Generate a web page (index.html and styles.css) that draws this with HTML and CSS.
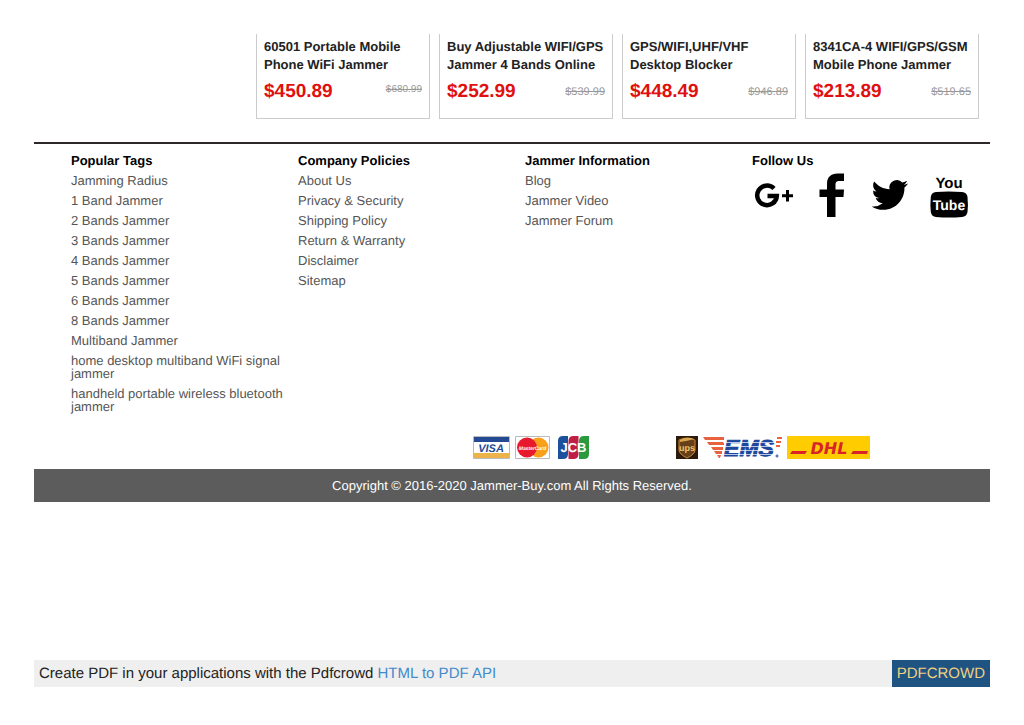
FILE: index.html
```html
<!DOCTYPE html>
<html lang="en">
  <head>
  <meta charset="UTF-8">
  <title>Jammer-Buy.com</title>
  <link rel="stylesheet" href="styles.css">
  </head>
  <body>
    <main class="products">
      <div class="product">
        <h3>60501 Portable Mobile Phone WiFi Jammer</h3>
        <div class="prices">
          <span class="price">$450.89</span>
          <del class="small">$680.99</del>
        </div>
      </div>
      <div class="product">
        <h3>Buy Adjustable WIFI/GPS Jammer 4 Bands Online</h3>
        <div class="prices">
          <span class="price">$252.99</span>
          <del>$539.99</del>
        </div>
      </div>
      <div class="product">
        <h3>GPS/WIFI,UHF/VHF Desktop Blocker</h3>
        <div class="prices">
          <span class="price">$448.49</span>
          <del>$946.89</del>
        </div>
      </div>
      <div class="product">
        <h3>8341CA-4 WIFI/GPS/GSM Mobile Phone Jammer</h3>
        <div class="prices">
          <span class="price">$213.89</span>
          <del>$519.65</del>
        </div>
      </div>
    </main>

    <footer>
      <div class="columns">
        <div>
          <h4>Popular Tags</h4>
          <ul>
            <li><a href="#">Jamming Radius</a></li>
            <li><a href="#">1 Band Jammer</a></li>
            <li><a href="#">2 Bands Jammer</a></li>
            <li><a href="#">3 Bands Jammer</a></li>
            <li><a href="#">4 Bands Jammer</a></li>
            <li><a href="#">5 Bands Jammer</a></li>
            <li><a href="#">6 Bands Jammer</a></li>
            <li><a href="#">8 Bands Jammer</a></li>
            <li><a href="#">Multiband Jammer</a></li>
            <li><a href="#">home desktop multiband WiFi signal jammer</a></li>
            <li><a href="#">handheld portable wireless bluetooth jammer</a></li>
          </ul>
        </div>
        <div>
          <h4>Company Policies</h4>
          <ul>
            <li><a href="#">About Us</a></li>
            <li><a href="#">Privacy &amp; Security</a></li>
            <li><a href="#">Shipping Policy</a></li>
            <li><a href="#">Return &amp; Warranty</a></li>
            <li><a href="#">Disclaimer</a></li>
            <li><a href="#">Sitemap</a></li>
          </ul>
        </div>
        <div>
          <h4>Jammer Information</h4>
          <ul>
            <li><a href="#">Blog</a></li>
            <li><a href="#">Jammer Video</a></li>
            <li><a href="#">Jammer Forum</a></li>
          </ul>
        </div>
        <div>
          <h4 class="follow">Follow Us</h4>
          <div class="social">
            <a href="#" aria-label="Google Plus">
              <svg width="44" height="46" viewBox="0 0 44 46">
                <path d="M22 16.500A9.800 9.800 0 1 0 24.800 24H15.500" fill="none" stroke="#000" stroke-width="4.500"/>
                <path d="M35.500 18v11.500M30 23.800h11" stroke="#000" stroke-width="3"/>
              </svg>
            </a>
            <a href="#" aria-label="Facebook">
              <svg width="44" height="46" viewBox="0 0 44 46">
                <path d="M17 45V25H9.500v-7.500H17V12c0-7 4-10.500 10.500-10.500h6.500V9h-4.500c-3 0-4 1-4 4v4.500H34L33.500 25h-8v20z"/>
              </svg>
            </a>
            <a href="#" aria-label="Twitter">
              <svg width="44" height="46" viewBox="0 0 24 24">
                <path transform="translate(2 2) scale(.83)" d="M23.950 4.570a10 10 0 0 1-2.820.770 4.960 4.960 0 0 0 2.160-2.720c-.950.550-2 .950-3.130 1.180a4.920 4.920 0 0 0-8.380 4.480C7.690 8.090 4.070 6.130 1.640 3.160a4.820 4.820 0 0 0-.670 2.480c0 1.710.870 3.210 2.190 4.100a4.900 4.900 0 0 1-2.230-.620v.060a4.920 4.920 0 0 0 3.950 4.830 5 5 0 0 1-2.210.080 4.940 4.940 0 0 0 4.600 3.420A9.870 9.870 0 0 1 0 19.540a13.990 13.990 0 0 0 7.550 2.210c9.050 0 14-7.500 14-13.980 0-.210 0-.420-.020-.630a9.940 9.940 0 0 0 2.420-2.570z"/>
              </svg>
            </a>
            <a href="#" aria-label="YouTube">
              <svg width="44" height="46" viewBox="0 0 44 46">
                <path d="M10 20q12-1 26 0 5 .5 5.500 5 .8 8 0 15-.7 4.500-5.500 5-13 1-26 0-4.500-.5-5.200-5-.8-7.500 0-15 .5-4.500 5.200-5z"/>
                <text x="23" y="16" font-size="15">You</text>
                <text x="23" y="38" font-size="14" fill="#fff">Tube</text>
              </svg>
            </a>
          </div>
        </div>
      </div>

      <div class="payments">
        <svg class="visa" width="37" height="24" viewBox="0 0 37 24">
          <path d="M.500.500h36v22H.500z" fill="#fff" stroke="#bbb"/>
          <path d="M1 1h35v5H1z" fill="#234a93"/>
          <path d="M1 17h35v5H1z" fill="#edb34b"/>
          <text x="18" y="16" font-size="11" font-style="italic" fill="#234a93">VISA</text>
        </svg>
        <svg class="mastercard" width="35" height="24" viewBox="0 0 35 24">
          <path d="M.500.500h34v22H.500z" fill="#fff" stroke="#bbb"/>
          <circle cx="23.500" cy="11.500" r="10" fill="#f9a01b"/>
          <circle cx="12" cy="11.500" r="10" fill="#e8192c"/>
          <text x="17.500" y="14" font-size="5" font-style="italic" fill="#fff">MasterCard</text>
        </svg>
        <svg class="jcb" width="31" height="24" viewBox="0 0 31 24">
          <path d="M5 0h5v18q0 5-5 5H0V5q0-5 5-5z" fill="#1c4f9c"/>
          <path d="M15.500 0h5v18q0 5-5 5h-5V5q0-5 5-5z" fill="#c01f45"/>
          <path d="M26 0h5v18q0 5-5 5h-5V5q0-5 5-5z" fill="#2b9a3e"/>
          <text x="15.500" y="16" font-size="13" fill="#fff">JCB</text>
        </svg>
        <svg class="ups" width="22" height="24" viewBox="0 0 22 24">
          <path d="M0 0h22v23H0z" fill="#2d1a0b"/>
          <path d="M3 4q8-4 16 0v10q0 4-8 8-8-4-8-8z" fill="#67401a" stroke="#c08a3a"/>
          <path d="M4 6q8-1 14-3-7-3-14 1z" fill="#d9a54e"/>
          <text x="11" y="15" font-size="9" fill="#efc36b">ups</text>
        </svg>
        <svg class="ems" width="79" height="24" viewBox="0 0 79 24">
          <path d="M0 1h21v3H2zM4 6h17v3H6zM8 11h12v3H10zM11 15h8v3h-6zM14 19h4l-1 3h-1z" fill="#e9623f"/>
          <path d="M74 1h5v2h-5zM73 5h5v2h-5zM73 9h4v2h-4z" fill="#e9623f"/>
          <text x="46" y="20" font-size="23" font-style="italic" fill="#1c479c" stroke="#1c479c">EMS</text>
          <path d="M20 6.500h52M20 10.500h52M20 14.500h52M20 18.500h52" stroke="#fff" stroke-width=".7"/>
          <circle cx="74" cy="20" r="1" fill="none" stroke="#1c479c"/>
        </svg>
        <svg class="dhl" width="83" height="24" viewBox="0 0 83 24">
          <path d="M0 0h83v23H0z" fill="#fc0"/>
          <path d="M5 15h15l-2 3H3zM66 15h15l-1 3H64z" fill="#d8232a"/>
          <text class="wide" x="42" y="18" font-size="16" font-style="italic" fill="#d8232a">DHL</text>
        </svg>
      </div>

      <p class="copyright">Copyright © 2016-2020 Jammer-Buy.com All Rights Reserved.</p>
    </footer>

    <div class="pdfcrowd">
      <p>Create PDF in your applications with the Pdfcrowd <a href="#">HTML to PDF API</a></p>
      <a class="brand" href="#">PDFCROWD</a>
    </div>
  </body>
</html>
```
FILE: styles.css
```css
* {
    box-sizing: border-box;
}

body {
    display: flex;
    flex-direction: column;
    min-height: 100vh;
    margin: 0;
    padding: 34px 34px 38px;
    background: #fff;
    font: 13px/13px "Liberation Sans", Arial, sans-serif;
    text-rendering: geometricPrecision;
}

h3, h4, p, ul {
    margin: 0;
    padding: 0;
}

a {
    text-decoration: none;
}

.products {
    display: grid;
    grid-template-columns: repeat(4, 1fr);
    gap: 9px;
    padding: 0 11px 0 222px;
    margin-bottom: 23px;
}

.product {
    padding: 4px 7px 13px;
    border: 1px solid #ccc;
    border-top: 0;
}

.product h3 {
    font-size: 13px;
    line-height: 18px;
    color: #222;
}

.prices {
    display: flex;
    justify-content: space-between;
    align-items: center;
    margin-top: 5px;
    line-height: 26px;
}

.price {
    font-size: 19px;
    font-weight: bold;
    color: #e01010;
}

del {
    font-size: 11px;
    color: #999;
}

del.small {
    font-size: 10px;
    line-height: 22px;
    align-self: flex-start;
}

footer {
    border-top: 2px solid #2b2729;
}

.columns {
    display: grid;
    grid-template-columns: repeat(4, 1fr);
    padding: 10px 11px 0 37px;
}

h4 {
    margin-bottom: 7px;
    font-size: 13px;
    color: #000;
}

h4.follow {
    margin-bottom: 5px;
}

ul {
    list-style: none;
    padding-right: 8px;
}

li {
    margin-bottom: 7px;
}

li a {
    color: #555;
}

.social {
    display: flex;
    gap: 14px;
}

.social svg {
    display: block;
}

svg text {
    font-family: "Liberation Sans", Arial, sans-serif;
    font-weight: bold;
    text-anchor: middle;
}

svg text.wide {
    font-family: "DejaVu Sans", sans-serif;
}

.payments {
    display: flex;
    justify-content: flex-end;
    gap: 5px;
    padding: 16px 120px 9px 0;
}

.jcb {
    margin-left: 3px;
}

.ups {
    margin-left: 82px;
}

.copyright {
    background: #5c5c5c;
    color: #fff;
    line-height: 33px;
    text-align: center;
}

.pdfcrowd {
    display: flex;
    justify-content: space-between;
    margin-top: auto;
    background: #efefef;
    color: #222;
    font-size: 15px;
    line-height: 27px;
}

.pdfcrowd p {
    padding-left: 5px;
}

.pdfcrowd p a {
    color: #428bca;
}

.pdfcrowd .brand {
    padding: 0 5px;
    background: #1f5382;
    color: #f0d080;
}
```
